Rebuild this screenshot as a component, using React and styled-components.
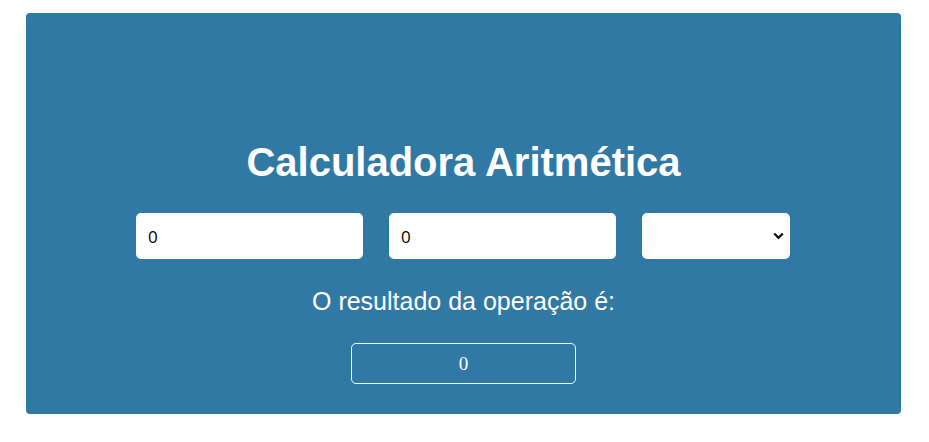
import React, { useState } from 'react';
import styled, { createGlobalStyle } from 'styled-components';

const GlobalStyle = createGlobalStyle`
  body {
    margin: 0;
    background: #ffffff;
    font-family: "Liberation Sans", Arial, sans-serif;
  }
`;

const Page = styled.div`
  padding: 13px 28px 28px 26px;
`;

const Panel = styled.div`
  width: 875px;
  box-sizing: border-box;
  background: #3179a5;
  border-radius: 4px;
  padding: 126px 0 30px;
  display: flex;
  flex-direction: column;
  align-items: center;
  color: #ffffff;
`;

const Title = styled.h1`
  margin: 0;
  font-size: 40px;
  font-weight: bold;
  line-height: 46px;
`;

const Row = styled.div`
  display: flex;
  gap: 26px;
  margin: 28px 1px 0 0;
`;

const NumberInput = styled.input`
  width: 227px;
  height: 46px;
  box-sizing: border-box;
  border: none;
  border-radius: 5px;
  padding: 0 12px;
  font-family: "Open Sans", "DejaVu Sans", sans-serif;
  font-size: 17px;
  color: #000000;
  background: #ffffff;
  outline: none;
`;

const SelectWrap = styled.div`
  position: relative;
  width: 148px;
  height: 46px;
`;

const OpSelect = styled.select`
  appearance: none;
  width: 100%;
  height: 100%;
  box-sizing: border-box;
  border: none;
  border-radius: 5px;
  background: #ffffff;
  font-size: 16px;
  padding: 0 8px;
  outline: none;
`;

const Chevron = styled.svg`
  position: absolute;
  right: 6px;
  top: 19px;
  width: 11px;
  height: 8px;
  pointer-events: none;
`;

const Label = styled.p`
  margin: 28px 0 0;
  font-size: 25px;
  line-height: 29px;
`;

const Result = styled.div`
  margin-top: 27px;
  width: 225px;
  height: 41px;
  box-sizing: border-box;
  border: 1px solid #ffffff;
  border-radius: 5px;
  display: flex;
  align-items: center;
  justify-content: center;
  font-family: "Liberation Serif", "Times New Roman", serif;
  font-size: 19px;
`;

export default function App() {
  const [a, setA] = useState('0');
  const [b, setB] = useState('0');
  const [op, setOp] = useState('');

  const x = Number(a) || 0;
  const y = Number(b) || 0;
  let result = 0;
  if (op === '+') result = x + y;
  else if (op === '-') result = x - y;
  else if (op === '*') result = x * y;
  else if (op === '/') result = y === 0 ? 0 : x / y;

  return (
    <>
      <GlobalStyle />
      <Page>
        <Panel>
          <Title>Calculadora Aritmética</Title>
          <Row>
            <NumberInput type="number" value={a} onChange={e => setA(e.target.value)} />
            <NumberInput type="number" value={b} onChange={e => setB(e.target.value)} />
            <SelectWrap>
              <OpSelect value={op} onChange={e => setOp(e.target.value)}>
                <option value=""></option>
                <option value="+">+</option>
                <option value="-">-</option>
                <option value="*">*</option>
                <option value="/">/</option>
              </OpSelect>
              <Chevron viewBox="0 0 11 8">
                <path d="M1.2 1.5 L5.5 5.8 L9.8 1.5" fill="none" stroke="#111" strokeWidth="2.3" />
              </Chevron>
            </SelectWrap>
          </Row>
          <Label>O resultado da operação é:</Label>
          <Result>{result}</Result>
        </Panel>
      </Page>
    </>
  );
}
